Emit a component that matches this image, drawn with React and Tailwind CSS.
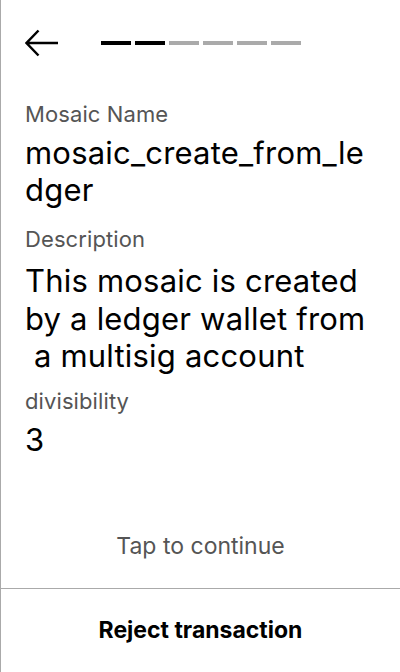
import React from "react";

export default function App() {
  const steps = [true, true, false, false, false, false];
  return (
    <div
      className="w-[400px] h-[672px] bg-white border-l border-[#aaaaaa] flex flex-col text-black"
      style={{ fontFamily: "Inter, 'Noto Sans', sans-serif" }}
    >
      <div className="h-[86px] flex items-center pl-6 pr-6 shrink-0">
        <svg width="34" height="30" viewBox="0 0 34 30" className="shrink-0">
          <path d="M1.5 15 H33 M13.5 2.5 L1.5 15 L13.5 27.5" fill="none" stroke="black" strokeWidth="2.5" />
        </svg>
        <div className="flex gap-1 ml-[42px] -mt-[1px]">
          {steps.map((on, i) => (
            <div key={i} className={`w-[30px] h-[4px] ${on ? "bg-black" : "bg-[#aaaaaa]"}`} />
          ))}
        </div>
      </div>
      <div className="px-6 flex flex-col pt-[15px]">
        <div className="text-[22px] leading-[26px] text-[#555555] tracking-[0.1px]">Mosaic Name</div>
        <div className="text-[31px] leading-[37px] tracking-[0.2px] whitespace-pre mt-[7px]">{"mosaic_create_from_le\ndger"}</div>
        <div className="text-[22px] leading-[26px] text-[#555555] tracking-[0.1px] mt-[18px]">Description</div>
        <div className="text-[31px] leading-[37.5px] tracking-[0.2px] whitespace-pre mt-[10px]">
          {"This mosaic is created\nby a ledger wallet from\n a multisig account"}
        </div>
        <div className="text-[22px] leading-[26px] text-[#555555] tracking-[0.1px] mt-[13px]">divisibility</div>
        <div className="text-[31px] leading-[37px] mt-[7px]">3</div>
      </div>
      <div className="flex-1" />
      <div className="text-center text-[23px] leading-[28px] text-[#555555] pb-[28px]">Tap to continue</div>
      <div className="h-[84px] border-t border-[#aaaaaa] flex items-center justify-center text-[23px] font-bold shrink-0">
        Reject transaction
      </div>
    </div>
  );
}
